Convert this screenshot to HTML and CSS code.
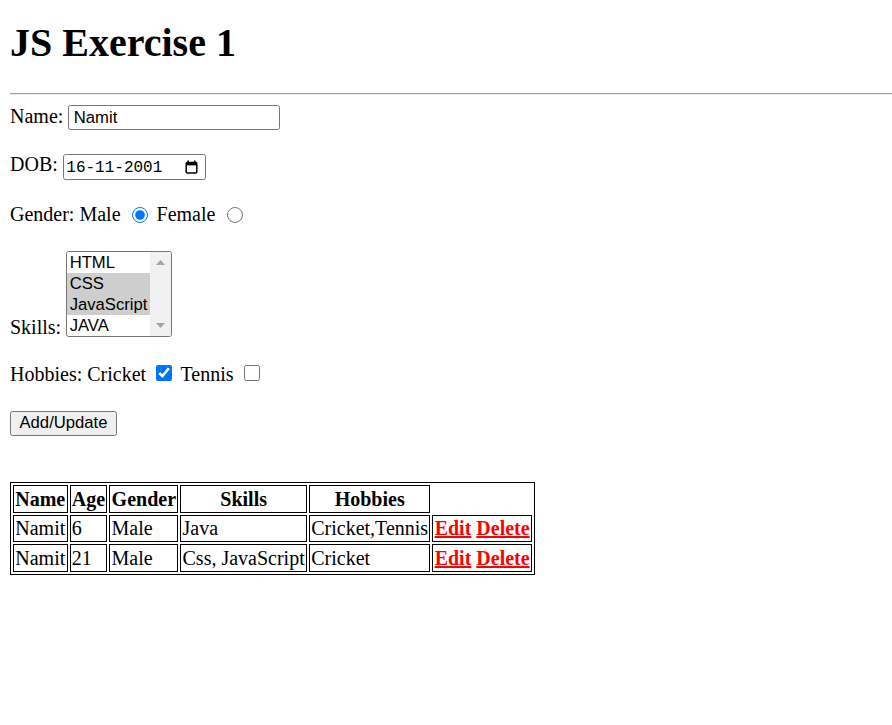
FILE: index.html
```html
<!DOCTYPE html>
<html lang="en">
<head>
<meta charset="utf-8">
<title>JS Exercise 1</title>
<link rel="stylesheet" href="styles.css">
</head>
<body>
<h1 class="title">JS Exercise 1</h1>
<hr class="rule">
<form class="form">
  <div class="row row-name">Name: <input class="text-input" type="text" value="Namit"></div>
  <div class="row row-dob">DOB: <span class="date-input"><span class="date-text">16-11-2001</span><svg class="cal-icon" width="13" height="14" viewBox="0 0 13 14"><path d="M3.2 0.5v2.5M9.8 0.5v2.5" stroke="#000" stroke-width="1.6"/><rect x="1.2" y="2.4" width="10.6" height="10.6" rx="1.3" fill="none" stroke="#000" stroke-width="1.5"/><rect x="1.2" y="2.4" width="10.6" height="3" fill="#000"/></svg></span></div>
  <div class="row row-gender">Gender: Male <input class="radio" type="radio" name="gender" checked> Female <input class="radio" type="radio" name="gender"></div>
  <div class="row row-skills">Skills: <div class="listbox" role="listbox" aria-multiselectable="true"><div class="options"><div class="option">HTML</div><div class="option selected">CSS</div><div class="option selected">JavaScript</div><div class="option">JAVA</div></div><div class="scrollbar"><svg width="9" height="5" viewBox="0 0 9 5"><path d="M0 5L4.5 0L9 5Z" fill="#a3a3a3"/></svg><svg width="9" height="5" viewBox="0 0 9 5"><path d="M0 0L4.5 5L9 0Z" fill="#a3a3a3"/></svg></div></div></div>
  <div class="row row-hobbies">Hobbies: Cricket <input class="check" type="checkbox" checked> Tennis <input class="check" type="checkbox"></div>
  <div class="row row-button"><button class="btn" type="button">Add/Update</button></div>
</form>
<table class="data">
  <tr><th>Name</th><th>Age</th><th>Gender</th><th>Skills</th><th>Hobbies</th></tr>
  <tr><td>Namit</td><td>6</td><td>Male</td><td>Java</td><td>Cricket,Tennis</td><td><a class="act" href="#">Edit</a> <a class="act" href="#">Delete</a></td></tr>
  <tr><td>Namit</td><td>21</td><td>Male</td><td>Css, JavaScript</td><td>Cricket</td><td><a class="act" href="#">Edit</a> <a class="act" href="#">Delete</a></td></tr>
</table>
</body>
</html>
```
FILE: styles.css
```css
html, body {
  background: #fff;
}
body {
  margin: 0 0 0 10px;
  font-family: "Liberation Serif", "Times New Roman", serif;
  font-size: 20px;
  color: #000;
}
.title {
  font-size: 40px;
  font-weight: bold;
  line-height: 46px;
  margin: 20px 0 0;
}
.rule {
  margin: 27px 0 10px;
  height: 0;
  border: 0;
  border-top: 1px solid #9a9a9a;
  border-bottom: 1px solid #eeeeee;
}
.form {
  margin: 0;
}
.row {
  margin-bottom: 23px;
  white-space: nowrap;
}
.row-name { height: 25.3px; }
.row-dob { height: 27.2px; }
.row-gender { height: 24.5px; }
.row-skills { height: 89.5px; }
.row-hobbies { height: 24px; }
.row-button { height: 24.5px; margin-bottom: 47.5px; }

.text-input {
  vertical-align: top;
  margin: 0.3px 0 0;
  box-sizing: border-box;
  width: 212px;
  height: 25px;
  padding: 0 4.5px;
  border: 1px solid #767676;
  border-radius: 2.5px;
  font-family: "Liberation Sans", Arial, sans-serif;
  font-size: 16.67px;
  line-height: 23px;
  color: #000;
  background: #fff;
}
.date-input {
  display: inline-flex;
  align-items: center;
  justify-content: space-between;
  vertical-align: top;
  margin-top: 1px;
  box-sizing: border-box;
  width: 143px;
  height: 25.5px;
  padding: 1px 6.5px 0 2.5px;
  border: 1px solid #767676;
  border-radius: 2.5px;
}
.date-text {
  font-family: "Liberation Mono", "Courier New", monospace;
  font-size: 16px;
  line-height: 18px;
}
.cal-icon {
  display: block;
  margin-top: -1px;
}
.radio {
  vertical-align: top;
  width: 16px;
  height: 16px;
  margin: 3.2px 3.75px 0 6.25px;
}
.check {
  vertical-align: top;
  width: 16px;
  height: 16px;
  margin: 2px 3.75px 0 5px;
}
.listbox {
  display: inline-flex;
  vertical-align: bottom;
  margin-bottom: 1.7px;
  box-sizing: border-box;
  width: 106px;
  height: 86px;
  border: 1px solid #767676;
  border-radius: 2.5px;
  overflow: hidden;
  font-family: "Liberation Sans", Arial, sans-serif;
  font-size: 16.67px;
  background: #fff;
}
.options {
  flex: 1;
}
.option {
  height: 21px;
  line-height: 21px;
  padding: 0 2.5px;
}
.option.selected {
  background: #cecece;
}
.scrollbar {
  width: 21px;
  background: #f1f1f1;
  display: flex;
  flex-direction: column;
  justify-content: space-between;
  align-items: center;
  padding: 8px 0;
  box-sizing: border-box;
}
.scrollbar svg {
  display: block;
}
.btn {
  box-sizing: border-box;
  width: 107px;
  height: 24.5px;
  padding: 0 7px;
  margin: 0;
  border: 1px solid #767676;
  border-radius: 2.5px;
  background: #efefef;
  font-family: "Liberation Sans", Arial, sans-serif;
  font-size: 16.67px;
  color: #000;
}
.data {
  border: 1px solid #000;
  border-spacing: 2.5px;
  font-size: 20px;
}
.data th, .data td {
  border: 1px solid #000;
  padding: 1.25px;
  line-height: 23px;
}
.data th {
  font-weight: bold;
  text-align: center;
}
.data td {
  text-align: left;
}
.act {
  color: #ff0000;
  font-weight: bold;
  text-decoration: underline;
}
```
